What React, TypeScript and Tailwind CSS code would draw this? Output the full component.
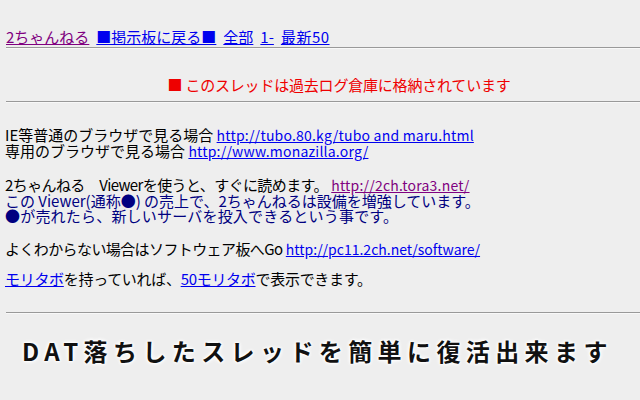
const JP = "font-['MS_PGothic','Noto_Sans_CJK_JP','Noto_Sans',sans-serif]"

function Rule({ className = '' }: { className?: string }) {
  return <div className={`ml-[6px] h-[2px] border-t border-[#999999] border-b border-b-[#f8f8f8] ${className}`} />
}

export default function App() {
  return (
    <div className={`w-[640px] h-[400px] overflow-hidden bg-[#eeeeee] text-black text-[15px] ${JP}`}>
      {/* top nav */}
      <div className="pt-[28px] pl-[6px] leading-[18px] flex gap-[7px]">
        <a className="underline text-[#800080]">2ちゃんねる</a>
        <a className="underline text-[#0000ee]">■掲示板に戻る■</a>
        <a className="underline text-[#0000ee]">全部</a>
        <a className="underline text-[#0000ee]">1-</a>
        <a className="underline text-[#0000ee] tracking-[0.5px]">最新50</a>
      </div>
      <Rule className="mt-[1px]" />

      <div className="mt-[27px] pl-[38px] text-center leading-[18px] text-[#ee0000] tracking-[-0.2px]">
        ■ このスレッドは過去ログ倉庫に格納されています
      </div>
      <Rule className="mt-[7px]" />

      <div className="mt-[24px] pl-[5px] leading-[16px]">
        <div>
          IE等普通のブラウザで見る場合{' '}
          <a className="underline text-[#0000ee] text-[14px] tracking-[0.2px]">http://tubo.80.kg/tubo and maru.html</a>
        </div>
        <div>
          専用のブラウザで見る場合{' '}
          <a className="underline text-[#0000ee] text-[14px] tracking-[0.2px]">http://www.monazilla.org/</a>
        </div>
      </div>

      <div className="mt-[18px] pl-[5px] leading-[15px]">
        <div>
          <span className="tracking-[-0.6px]">2ちゃんねる　Viewerを使うと、すぐに読めます。</span>{' '}
          <a className="underline text-[#800080] text-[14px] tracking-[0.2px]">http://2ch.tora3.net/</a>
        </div>
        <div className="text-[#000080]">この Viewer(通称●) の売上で、2ちゃんねるは設備を増強しています。</div>
        <div className="text-[#000080] tracking-[0.2px]">●が売れたら、新しいサーバを投入できるという事です。</div>
      </div>

      <div className="mt-[18px] pl-[5px] leading-[16px]">
        <span className="tracking-[-0.6px]">よくわからない場合はソフトウェア板へGo</span>{' '}
        <a className="underline text-[#0000ee] text-[14px] tracking-[0px]">http://pc11.2ch.net/software/</a>
      </div>

      <div className="mt-[14px] pl-[5px] leading-[16px] tracking-[-0.3px]">
        <a className="underline text-[#0000ee]">モリタボ</a>を持っていれば、
        <a className="underline text-[#0000ee]">50モリタボ</a>で表示できます。
      </div>

      <Rule className="mt-[25px]" />

      <div className="mt-[22px] pl-[22px] leading-[30px] text-[24px] font-bold tracking-[5.4px] text-[#111111] font-['Noto_Sans_CJK_JP',sans-serif] [text-shadow:0_0_2px_#fff,0_0_2px_#fff,0_0_3px_#fff,0_0_4px_#fff,0_0_5px_#fff]">
        DAT落ちしたスレッドを簡単に復活出来ます
      </div>
    </div>
  )
}
